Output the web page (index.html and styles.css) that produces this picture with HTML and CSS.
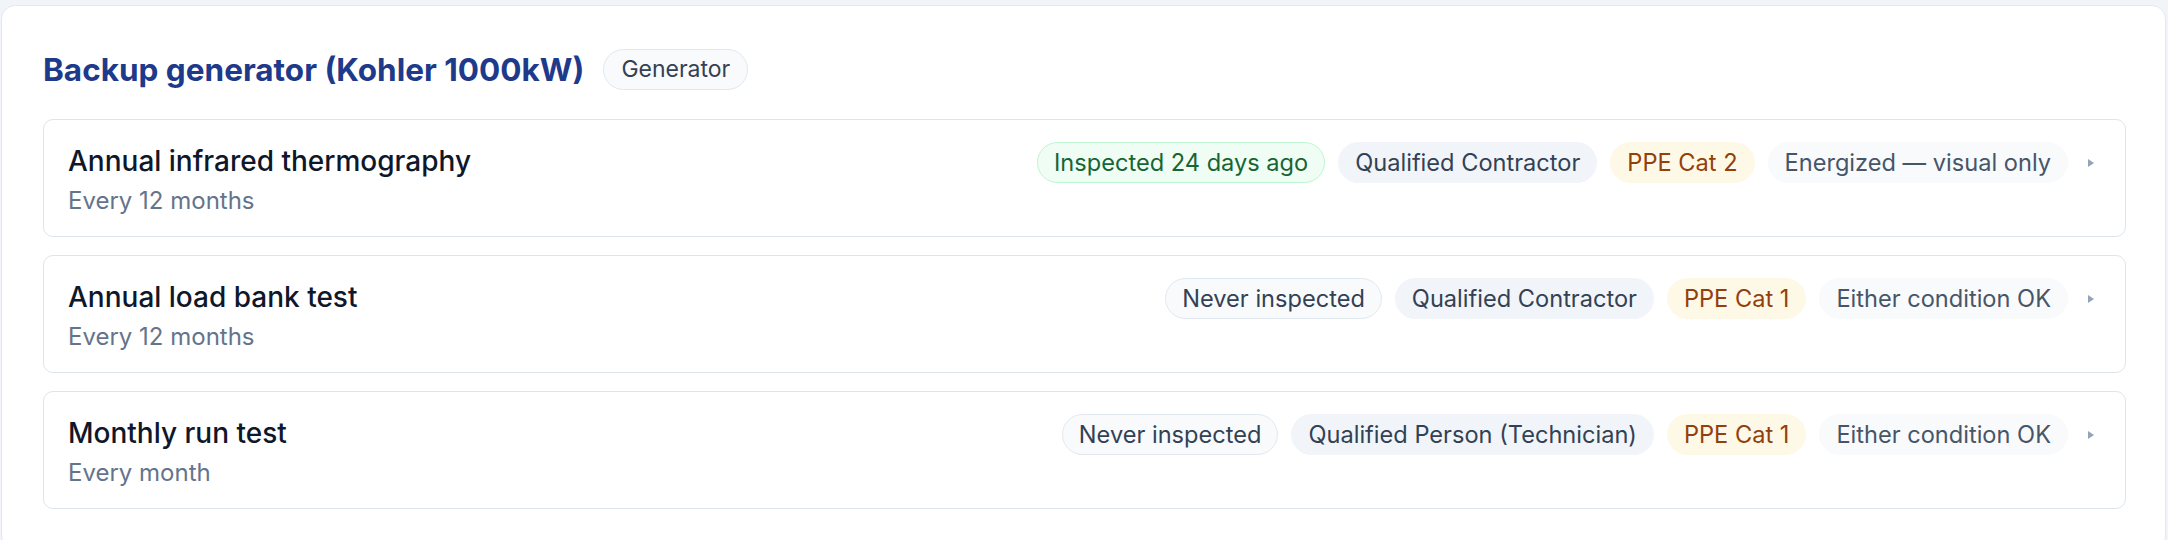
FILE: index.html
```html
<!DOCTYPE html>
<html lang="en">
<head>
    <meta charset="UTF-8">
    <meta name="viewport" content="width=device-width, initial-scale=1.0">
    <title>Asset maintenance tasks</title>
    <link rel="stylesheet" href="styles.css">
</head>
<body>

    <!-- asset card -->
    <section class="asset">
        <div class="asset-head">
            <h2 class="asset-name">Backup generator (Kohler 1000kW)</h2>
            <span class="tag">Generator</span>
        </div>

        <div class="task-list">
            <div class="task">
                <div class="task-info">
                    <div class="task-name">Annual infrared thermography</div>
                    <div class="task-freq">Every 12 months</div>
                </div>
                <div class="task-meta">
                    <span class="chip chip-ok">Inspected 24 days ago</span>
                    <span class="chip chip-role">Qualified Contractor</span>
                    <span class="chip chip-ppe">PPE Cat 2</span>
                    <span class="chip chip-cond">Energized — visual only</span>
                    <span class="caret"><svg width="8" height="10" viewBox="0 0 8 10"><path d="M1 1 L7 5 L1 9 Z" fill="#94a3b8"/></svg></span>
                </div>
            </div>

            <div class="task">
                <div class="task-info">
                    <div class="task-name">Annual load bank test</div>
                    <div class="task-freq">Every 12 months</div>
                </div>
                <div class="task-meta">
                    <span class="chip chip-never">Never inspected</span>
                    <span class="chip chip-role">Qualified Contractor</span>
                    <span class="chip chip-ppe">PPE Cat 1</span>
                    <span class="chip chip-cond">Either condition OK</span>
                    <span class="caret"><svg width="8" height="10" viewBox="0 0 8 10"><path d="M1 1 L7 5 L1 9 Z" fill="#94a3b8"/></svg></span>
                </div>
            </div>

            <div class="task">
                <div class="task-info">
                    <div class="task-name">Monthly run test</div>
                    <div class="task-freq">Every month</div>
                </div>
                <div class="task-meta">
                    <span class="chip chip-never">Never inspected</span>
                    <span class="chip chip-role">Qualified Person (Technician)</span>
                    <span class="chip chip-ppe">PPE Cat 1</span>
                    <span class="chip chip-cond">Either condition OK</span>
                    <span class="caret"><svg width="8" height="10" viewBox="0 0 8 10"><path d="M1 1 L7 5 L1 9 Z" fill="#94a3b8"/></svg></span>
                </div>
            </div>
        </div>
    </section>

</body>
</html>
```

FILE: styles.css
```css
/* page */
body {
    margin: 0;
    padding: 5px 2px 0 1px;
    background: #f1f5f9;
    font-family: 'Inter', 'Noto Sans', sans-serif;
    color: #0f172a;
}

/* asset card */
.asset {
    background: #fff;
    border: 1px solid #e2e8f0;
    border-radius: 14px;
    padding: 43px 39px 40px 41px;
}

.asset-head {
    display: flex;
    align-items: center;
    gap: 19px;
    margin-bottom: 29px;
}

.asset-name {
    margin: 0;
    font-size: 31.5px;
    font-weight: 700;
    line-height: 38px;
    color: #1e3a8a;
}

.tag {
    display: inline-block;
    padding: 5px 17px;
    font-size: 23px;
    line-height: 29px;
    color: #334155;
    background: #f8fafc;
    border: 1px solid #e2e8f0;
    border-radius: 999px;
}

/* tasks */
.task-list {
    display: flex;
    flex-direction: column;
    gap: 18px;
}

.task {
    display: flex;
    justify-content: space-between;
    align-items: flex-start;
    padding: 24px 24px 20px;
    border: 1px solid #dde5ec;
    border-radius: 10px;
}

.task-name {
    font-size: 28px;
    font-weight: 500;
    line-height: 34px;
}

.task-freq {
    margin-top: 8px;
    font-size: 24px;
    line-height: 30px;
    color: #64748b;
}

.task-meta {
    display: flex;
    align-items: center;
    gap: 13px;
    margin-top: -2px;
}

/* chips */
.chip {
    display: inline-block;
    padding: 5px 16px;
    font-size: 23.6px;
    line-height: 29px;
    border: 1px solid transparent;
    border-radius: 999px;
    white-space: nowrap;
}

.chip-ok {
    color: #166534;
    background: #f0fdf4;
    border-color: #bbf7d0;
}

.chip-never {
    color: #334155;
    background: #f8fafc;
    border-color: #e2e8f0;
}

.chip-role {
    color: #334155;
    background: #f1f5f9;
    border-color: #f1f5f9;
}

.chip-ppe {
    color: #92400e;
    background: #fef9e7;
    border-color: #fef9e7;
}

.chip-cond {
    color: #475569;
    background: #f8fafc;
    border-color: #f8fafc;
}

.caret {
    display: flex;
    justify-content: center;
    align-items: center;
    width: 20px;
}
```
